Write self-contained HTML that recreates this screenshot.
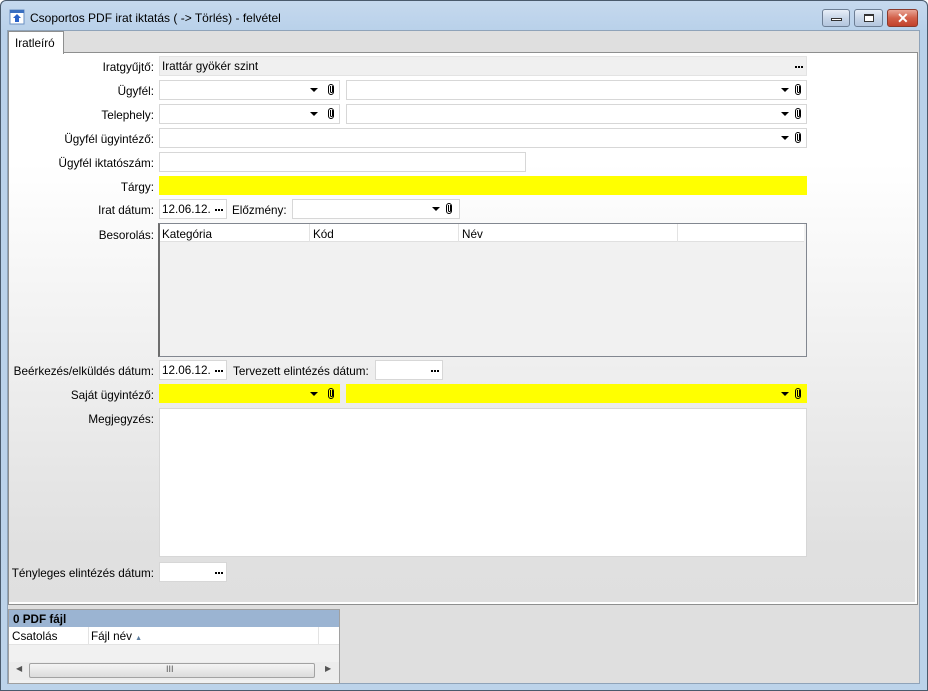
<!DOCTYPE html>
<html><head><meta charset="utf-8"><style>
*{box-sizing:border-box;margin:0;padding:0}
body{width:928px;height:691px;overflow:hidden;font:11.7px "Liberation Sans",sans-serif;color:#000;background:#fff}
.win{position:absolute;left:0;top:0;width:928px;height:691px;border-radius:6px 6px 0 0;background:linear-gradient(#c6d9ee,#b9d1ea 30px,#bcd3ea);box-shadow:inset 0 0 0 1px #4a5a6c}
.a{position:absolute}
.title{left:30px;top:11px;font-size:12px;color:#000}
.client{left:7px;top:30px;width:913px;height:654px;background:#dfdfdf;border:1px solid #8fa3b9}
.tabstrip{left:8px;top:31px;width:911px;height:22px;background:#dfdfdf}
.tab{left:8px;top:31px;width:56px;height:23px;background:#fff;border:1px solid #8e8f8f;border-bottom:none;padding:5px 0 0 6px}
.panel{left:8px;top:52px;width:910px;height:553px;border:1px solid #8e8f8f;background:linear-gradient(#fff,#fff 20%,#e0e0e0 90%,#dfdfdf);box-shadow:inset -2px -2px 0 #fff}
.lbl{position:absolute;right:774px;text-align:right;white-space:nowrap}
.f{position:absolute;background:#fff;border:1px solid #d7d7d7;height:20px;padding:3px 0 0 2px;white-space:nowrap}
.y{background:#ff0;border-color:#ff0}
.g{background:#f0f0f0;border-color:#e3e3e3}
.dd{position:absolute;top:7px;width:0;height:0;border-left:4px solid transparent;border-right:4px solid transparent;border-top:4px solid #000}
.clip{position:absolute;top:3px;width:6px;height:11px;border:1.5px solid #000;border-radius:3px}
.clip:after{content:"";position:absolute;left:1px;top:1px;width:1px;height:6px;border:1px solid #000;border-top:none;border-radius:0 0 2px 2px}
.dots{position:absolute;top:9px;width:2px;height:2px;background:#000;box-shadow:3px 0 0 #000,6px 0 0 #000}
.btn{position:absolute;top:9px;height:18px;border:1px solid #6d7e94;border-radius:3px;background:linear-gradient(#e8eff8,#c8d6e8 50%,#b4c6de)}
</style></head><body>
<div class="win">
 <svg class="a" style="left:9px;top:9px" width="16" height="16"><rect x="1" y="1" width="14" height="14" fill="#fff" stroke="#6a8fc2"/><rect x="1" y="1" width="14" height="3" fill="#3a6fc0"/><path d="M8 5 L12 9 H10 V13 H6 V9 H4 Z" fill="#2a62c8"/></svg>
 <div class="a title">Csoportos PDF irat iktatás ( -&gt; Törlés) - felvétel</div>
 <div class="btn" style="left:822px;width:28px"><div class="a" style="left:8px;top:8px;width:11px;height:3px;border:1px solid #333;background:#fff"></div></div>
 <div class="btn" style="left:854px;width:29px"><div class="a" style="left:9px;top:4px;width:10px;height:8px;border:1px solid #333;border-top-width:2px;background:#fff"></div></div>
 <div class="btn" style="left:887px;width:31px;border-color:#8a3a2c;background:linear-gradient(#e9a596,#d2604a 50%,#c2412b)"><div class="a" style="left:9px;top:0px;color:#fff;font-weight:bold;font-size:14px">✕</div></div>
 <div class="a client"></div>
 <div class="a tabstrip"></div>
 <div class="a panel"></div>
 <div class="a tab">Iratleíró</div>

 <div class="lbl" style="top:61px">Iratgyűjtő:</div>
 <div class="f g" style="left:159px;top:56px;width:648px">Irattár gyökér szint<span class="dots" style="right:9px"></span></div>

 <div class="lbl" style="top:85px">Ügyfél:</div>
 <div class="f" style="left:159px;top:80px;width:181px"><span class="dd" style="left:150px"></span><span class="clip" style="left:168px"></span></div>
 <div class="f" style="left:346px;top:80px;width:461px"><span class="dd" style="left:434px"></span><span class="clip" style="left:448px"></span></div>

 <div class="lbl" style="top:109px">Telephely:</div>
 <div class="f" style="left:159px;top:104px;width:181px"><span class="dd" style="left:150px"></span><span class="clip" style="left:168px"></span></div>
 <div class="f" style="left:346px;top:104px;width:461px"><span class="dd" style="left:434px"></span><span class="clip" style="left:448px"></span></div>

 <div class="lbl" style="top:133px">Ügyfél ügyintéző:</div>
 <div class="f" style="left:159px;top:128px;width:648px"><span class="dd" style="left:621px"></span><span class="clip" style="left:635px"></span></div>

 <div class="lbl" style="top:157px">Ügyfél iktatószám:</div>
 <div class="f" style="left:159px;top:152px;width:367px"></div>

 <div class="lbl" style="top:181px">Tárgy:</div>
 <div class="f y" style="left:159px;top:176px;width:648px;height:19px"></div>

 <div class="lbl" style="top:204px">Irat dátum:</div>
 <div class="f" style="left:159px;top:199px;width:68px">12.06.12.<span class="dots" style="right:9px"></span></div>
 <div class="a" style="left:232px;top:204px">Előzmény:</div>
 <div class="f" style="left:292px;top:199px;width:168px"><span class="dd" style="left:139px"></span><span class="clip" style="left:153px"></span></div>

 <div class="lbl" style="top:229px">Besorolás:</div>
 <div class="a" style="left:158px;top:223px;width:649px;height:134px;border:1px solid #828790;border-left:2px solid #6d6d6d;background:#f1f1f1"></div>
 <div class="a" style="left:160px;top:224px;width:644px;height:18px;background:#fff;border-bottom:1px solid #e0e0e0"></div>
 <div class="a" style="left:162px;top:228px">Kategória</div>
 <div class="a" style="left:309px;top:224px;height:18px;border-left:1px solid #e3e3e3;padding:4px 0 0 3px">Kód</div>
 <div class="a" style="left:458px;top:224px;height:18px;border-left:1px solid #e3e3e3;padding:4px 0 0 3px">Név</div>
 <div class="a" style="left:677px;top:224px;height:18px;border-left:1px solid #e3e3e3"></div>

 <div class="lbl" style="top:365px">Beérkezés/elküldés dátum:</div>
 <div class="f" style="left:159px;top:360px;width:68px">12.06.12.<span class="dots" style="right:9px"></span></div>
 <div class="a" style="left:233px;top:365px">Tervezett elintézés dátum:</div>
 <div class="f" style="left:375px;top:360px;width:68px"><span class="dots" style="right:9px"></span></div>

 <div class="lbl" style="top:389px">Saját ügyintéző:</div>
 <div class="f y" style="left:159px;top:384px;width:181px;height:19px"><span class="dd" style="left:150px"></span><span class="clip" style="left:168px"></span></div>
 <div class="f y" style="left:346px;top:384px;width:461px;height:19px"><span class="dd" style="left:434px"></span><span class="clip" style="left:448px"></span></div>

 <div class="lbl" style="top:413px">Megjegyzés:</div>
 <div class="f" style="left:159px;top:408px;width:648px;height:149px"></div>

 <div class="lbl" style="top:567px">Tényleges elintézés dátum:</div>
 <div class="f" style="left:159px;top:562px;width:68px"><span class="dots" style="right:9px"></span></div>

 <div class="a" style="left:8px;top:609px;width:332px;height:75px;background:#f1f1f1;border:1px solid #a0a0a0"></div>
 <div class="a" style="left:9px;top:610px;width:330px;height:17px;background:#9bb4d2;font-weight:bold;padding:3px 0 0 4px">0 PDF fájl</div>
 <div class="a" style="left:9px;top:627px;width:330px;height:18px;background:#fff;border-bottom:1px solid #e3e3e3"></div>
 <div class="a" style="left:12px;top:630px">Csatolás</div>
 <div class="a" style="left:88px;top:627px;height:18px;border-left:1px solid #e3e3e3;padding:3px 0 0 2px">Fájl név <span style="font-size:7px;color:#6080a0">▲</span></div>
 <div class="a" style="left:318px;top:627px;height:18px;border-left:1px solid #e3e3e3"></div>
 <div class="a" style="left:9px;top:662px;width:330px;height:18px;background:#ececec"></div>
 <div class="a" style="left:16px;top:664px;font-size:8px;color:#555">◀</div>
 <div class="a" style="left:29px;top:663px;width:286px;height:15px;border:1px solid #a2a2a2;border-radius:2px;background:linear-gradient(#f4f4f4,#dcdcdc)"></div>
 <div class="a" style="left:166px;top:664px;font-size:9px;color:#555">III</div>
 <div class="a" style="left:325px;top:664px;font-size:8px;color:#555">▶</div>
</div>
</body></html>
